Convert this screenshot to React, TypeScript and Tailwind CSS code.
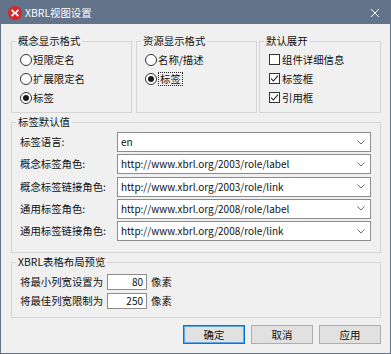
import React from "react";

function Radio({ checked }: { checked?: boolean }) {
  return (
    <span className="w-[12px] h-[12px] rounded-full border border-[#333333] bg-white flex items-center justify-center shrink-0">
      {checked && <span className="w-[6px] h-[6px] rounded-full bg-[#1a1a1a]" />}
    </span>
  );
}

function Check({ checked }: { checked?: boolean }) {
  return (
    <span className="w-[11px] h-[11px] border border-[#333333] bg-white flex items-center justify-center shrink-0">
      {checked && (
        <svg width="9" height="9" viewBox="0 0 9 9">
          <path d="M1 4.6 L3.4 7 L8 1.6" fill="none" stroke="#222" strokeWidth="1.1" />
        </svg>
      )}
    </span>
  );
}

function Chevron() {
  return (
    <svg width="8" height="5" viewBox="0 0 8 5" className="shrink-0">
      <path d="M0.5 0.5 L4 4 L7.5 0.5" fill="none" stroke="#6e6e6e" strokeWidth="1" />
    </svg>
  );
}

const comboRows = [
  ["标签语言:", "en"],
  ["概念标签角色:", "http://www.xbrl.org/2003/role/label"],
  ["概念标签链接角色:", "http://www.xbrl.org/2003/role/link"],
  ["通用标签角色:", "http://www.xbrl.org/2008/role/label"],
  ["通用标签链接角色:", "http://www.xbrl.org/2008/role/link"],
];

export default function App() {
  return (
    <div className="w-[391px] h-[354px] border border-[#63748a] bg-[#f0f0f0] flex flex-col text-[10.4px] text-[#111] font-['Noto_Sans_CJK_SC','Noto_Sans',sans-serif] leading-[14px] overflow-hidden">
      {/* Title bar */}
      <div className="h-[23px] bg-[#63748a] flex items-center pl-[7px] pr-[7px] shrink-0">
        <svg width="14" height="14" viewBox="0 0 14 14" className="shrink-0">
          <circle cx="7" cy="7" r="7" fill="#d8262c" />
          <path d="M3.6 3.8 L6.6 7 L3.6 10.2" fill="none" stroke="#fff" strokeWidth="1.8" />
          <path d="M10.4 3.8 L7.4 7 L10.4 10.2" fill="none" stroke="#fff" strokeWidth="1.8" />
        </svg>
        <span className="ml-[3px] text-white text-[10.4px]">XBRL视图设置</span>
        <div className="flex-1" />
        <svg width="10" height="10" viewBox="0 0 10 10" className="mr-[3px]">
          <path d="M1 1 L9 9 M9 1 L1 9" stroke="#ffffff" strokeWidth="1" />
        </svg>
      </div>

      {/* Body */}
      <div className="flex-1 flex flex-col pl-[10px] pr-[9px] pt-[10px]">
        <div className="flex">
          <fieldset className="border border-[#d5d5d5] w-[121px] h-[79px] p-0 m-0">
            <legend className="ml-[4px] px-[2px] leading-[14px]">概念显示格式</legend>
            <div className="flex flex-col pt-[2px] pl-[8px]">
              <div className="h-[19px] flex items-center gap-[1px]"><Radio /><span>短限定名</span></div>
              <div className="h-[19px] flex items-center gap-[1px]"><Radio /><span>扩展限定名</span></div>
              <div className="h-[19px] flex items-center gap-[1px]"><Radio checked /><span>标签</span></div>
            </div>
          </fieldset>
          <fieldset className="ml-[4px] border border-[#d5d5d5] w-[121px] h-[79px] p-0 m-0">
            <legend className="ml-[4px] px-[2px] leading-[14px]">资源显示格式</legend>
            <div className="flex flex-col pt-[2px] pl-[8px]">
              <div className="h-[19px] flex items-center gap-[1px]"><Radio /><span>名称/描述</span></div>
              <div className="h-[19px] flex items-center gap-[1px]"><Radio checked /><span className="border border-dotted border-[#222] px-[1px] leading-[12px]">标签</span></div>
            </div>
          </fieldset>
          <fieldset className="ml-[2px] border border-[#d5d5d5] w-[122px] h-[79px] p-0 m-0">
            <legend className="ml-[4px] px-[2px] leading-[14px]">默认展开</legend>
            <div className="flex flex-col pt-[2px] pl-[9px]">
              <div className="h-[19px] flex items-center gap-[2px]"><Check /><span>组件详细信息</span></div>
              <div className="h-[19px] flex items-center gap-[2px]"><Check checked /><span>标签框</span></div>
              <div className="h-[19px] flex items-center gap-[2px]"><Check checked /><span>引用框</span></div>
            </div>
          </fieldset>
        </div>

        <fieldset className="mt-[2px] border border-[#d5d5d5] w-[370px] h-[138px] p-0 m-0">
          <legend className="ml-[4px] px-[2px] leading-[14px]">标签默认值</legend>
          <div className="flex flex-col gap-[2.25px] pt-[3px] pl-[8px] pr-[9px]">
            {comboRows.map(([label, value]) => (
              <div key={label} className="flex items-center h-[20px]">
                <span className="w-[97px] shrink-0">{label}</span>
                <div className="flex-1 h-[20px] border border-[#8c8c8c] bg-white flex items-center pl-[3px] pr-[5px]">
                  <span className="flex-1 text-[10px] text-[#111]">{value}</span>
                  <Chevron />
                </div>
              </div>
            ))}
          </div>
        </fieldset>

        <fieldset className="mt-[2px] border border-[#d5d5d5] w-[370px] h-[63px] p-0 m-0">
          <legend className="ml-[4px] px-[2px] leading-[14px]">XBRL表格布局预览</legend>
          <div className="flex flex-col pt-[3px] pl-[8px]">
            <div className="h-[19px] flex items-center">
              <span className="w-[87px] shrink-0">将最小列宽设置为</span>
              <div className="w-[40px] h-[16px] border border-[#8c8c8c] bg-white flex items-center justify-end pr-[3px] text-[10px]">80</div>
              <span className="ml-[4px]">像素</span>
            </div>
            <div className="h-[19px] flex items-center">
              <span className="w-[87px] shrink-0">将最佳列宽限制为</span>
              <div className="w-[40px] h-[16px] border border-[#8c8c8c] bg-white flex items-center justify-end pr-[3px] text-[10px]">250</div>
              <span className="ml-[4px]">像素</span>
            </div>
          </div>
        </fieldset>

        <div className="mt-[7px] flex justify-end gap-[6px]">
          <button className="w-[62px] h-[19px] bg-[#e1e1e1] border border-[#0078d7] shadow-[inset_0_0_0_1px_#5fa8e8] flex items-center justify-center leading-[14px]">确定</button>
          <button className="w-[62px] h-[19px] bg-[#e1e1e1] border border-[#adadad] flex items-center justify-center leading-[14px]">取消</button>
          <button className="w-[62px] h-[19px] bg-[#e1e1e1] border border-[#adadad] flex items-center justify-center leading-[14px]">应用</button>
        </div>
      </div>
    </div>
  );
}
